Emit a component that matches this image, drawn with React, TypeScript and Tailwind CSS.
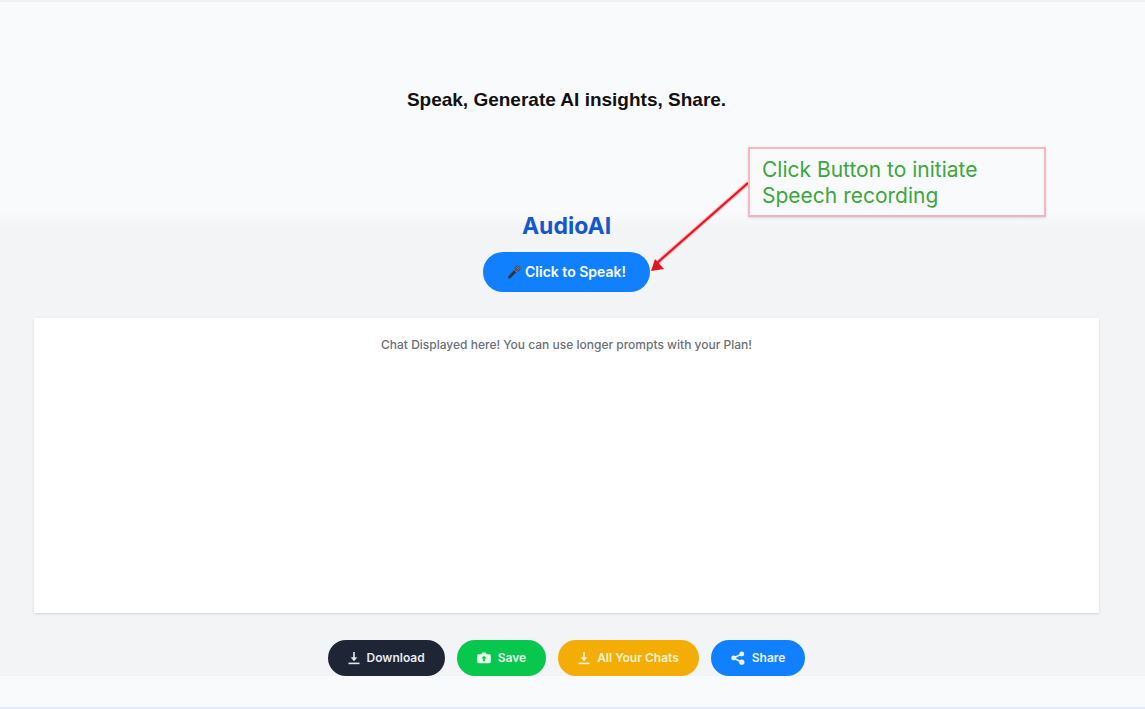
import React from 'react';

interface ActionProps {
  label: string;
  icon: React.ReactNode;
  className: string;
}

const DownloadIcon: React.FC = () => (
  <svg viewBox="0 0 12 14" className="w-3 h-3.5" fill="none" stroke="currentColor" strokeWidth="1.6">
    <path d="M6 1v8" />
    <path d="M3.2 6.6h5.6L6 10z" fill="currentColor" strokeWidth="0.5" />
    <path d="M0.5 12.4h11" />
  </svg>
);

const CameraIcon: React.FC = () => (
  <svg viewBox="0 0 14 14" className="w-3.5 h-3.5" fill="currentColor">
    <path
      fillRule="evenodd"
      d="M1.6 3.2h2.8L5.2 1.6h3.6l.8 1.6h2.8q1.4 0 1.4 1.4v6.2q0 1.4-1.4 1.4H1.6Q.2 12.2.2 10.8V4.6q0-1.4 1.4-1.4zM7 4.8 4.6 7.4h1.5v2.8h1.8V7.4h1.5z"
    />
  </svg>
);

const ShareIcon: React.FC = () => (
  <svg viewBox="0 0 14 14" className="w-3.5 h-3.5" fill="currentColor">
    <path d="M2.6 7 10.8 3M2.6 7l8.2 4.2" stroke="currentColor" strokeWidth="1.8" />
    <circle cx="2.6" cy="7" r="2.4" />
    <circle cx="10.8" cy="3" r="2.4" />
    <circle cx="10.8" cy="11.2" r="2.6" />
  </svg>
);

const MicIcon: React.FC = () => (
  <svg viewBox="0 0 14 14" className="w-3.5 h-3.5">
    <path d="M1.4 13.4 1 11.8 7.8 4.2l2.4 2.2L3 13.4z" fill="#27364a" />
    <path d="M7.4 4.6 9.8 6.8" stroke="#8c9199" strokeWidth="1.2" />
    <circle cx="10.6" cy="3.6" r="3" fill="#4b5563" />
    <path d="M9.2 2.4l2.8 2.6M10.8 1.4l1.8 2" stroke="#8c9199" strokeWidth="0.6" />
  </svg>
);

const ActionButton: React.FC<ActionProps> = ({ label, icon, className }) => (
  <button
    type="button"
    className={`flex items-center gap-[7px] h-9 px-5 rounded-full text-xs font-semibold ${className}`}
  >
    {icon}
    {label}
  </button>
);

const Callout: React.FC = () => (
  <div className="absolute left-full bottom-5 flex items-start">
    <svg width="98" height="125" viewBox="0 0 98 125" className="block" aria-hidden="true">
      <path d="M98 36 7 116" stroke="#fda4af" strokeWidth="4" fill="none" />
      <path d="M98 36 7 116" stroke="#e3141e" strokeWidth="2" fill="none" />
      <path d="M1 124 5 112l9 10z" fill="#e3141e" />
    </svg>
    <p className="w-[298px] h-[70px] border-2 border-[#fbb6c0] border-b-[#eeb4c2] shadow-sm pl-3 pt-2 text-left text-[21px] leading-[26px] text-[#3da63d]">
      Click Button to initiate
      <br />
      Speech recording
    </p>
  </div>
);

const App: React.FC = () => {
  return (
    <div className="min-h-screen flex flex-col bg-[#f9fafc] border-t-2 border-[#f0f1f3] font-['Inter',sans-serif]">
      <header className="h-[210px] pt-[84px] pr-3 text-center">
        <h1 className="font-['Liberation_Sans',sans-serif] text-[19px] leading-7 font-bold text-[#111]">
          Speak, Generate AI insights, Share.
        </h1>
      </header>

      <main className="flex flex-col items-center bg-linear-to-b from-[#f9fafc] to-[#f3f4f6] to-[16px] pl-[34px] pr-[46px]">
        <h2 className="text-[23px] leading-7 font-bold text-[#1557cf]">AudioAI</h2>
        <div className="relative mt-3">
          <button
            type="button"
            className="flex items-center justify-center gap-1 w-[167px] h-10 rounded-full bg-[#1080ff] text-white text-sm font-semibold whitespace-nowrap"
          >
            <MicIcon />
            Click to Speak!
          </button>
          <Callout />
        </div>

        <section className="w-full h-[295px] mt-[26px] pt-[17px] bg-white shadow-sm text-center">
          <p className="text-xs leading-5 font-medium text-[#6b6f77]">
            Chat Displayed here! You can use longer prompts with your Plan!
          </p>
        </section>

        <div className="flex gap-3 pt-[27px]">
          <ActionButton label="Download" icon={<DownloadIcon />} className="bg-[#1e2635] text-[#e5e9f0]" />
          <ActionButton label="Save" icon={<CameraIcon />} className="bg-[#08c74d] text-[#e6fbee]" />
          <ActionButton label="All Your Chats" icon={<DownloadIcon />} className="bg-[#f3ad05] text-[#fff3d3]" />
          <ActionButton label="Share" icon={<ShareIcon />} className="bg-[#1080ff] text-[#eaf3ff]" />
        </div>
      </main>
      <footer className="grow border-b-2 border-[#e3eafb]" />
    </div>
  );
};

export default App;
